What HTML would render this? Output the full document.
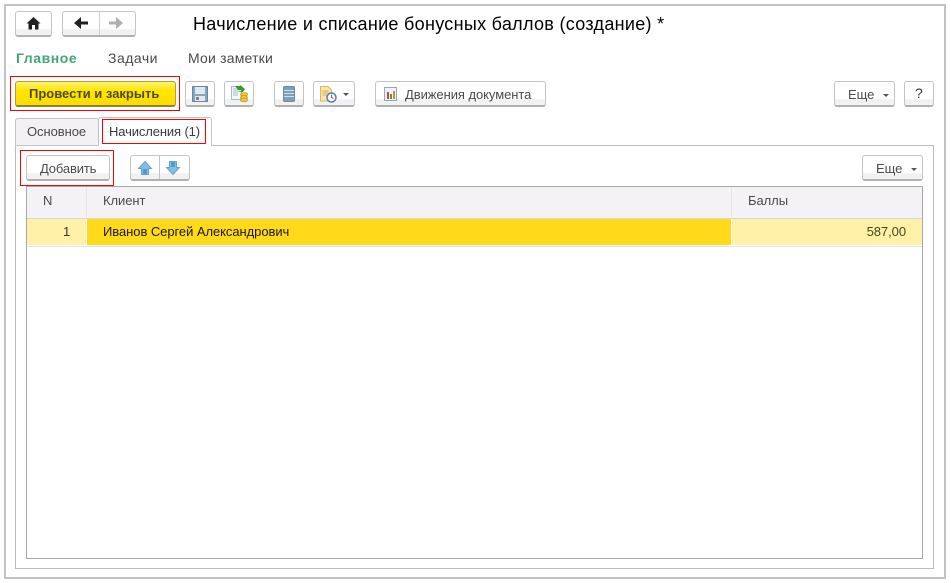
<!DOCTYPE html>
<html><head><meta charset="utf-8">
<style>
html,body{margin:0;padding:0;background:#fff}
body{width:951px;height:583px;position:relative;overflow:hidden;font-family:"Liberation Sans",sans-serif;font-size:13px;color:#4a4a4a}
.a{position:absolute;box-sizing:border-box}
.t{position:absolute;white-space:nowrap;line-height:16px;letter-spacing:-.06px}
.b{position:absolute;box-sizing:border-box;height:26px;background:linear-gradient(#fff 0,#fff 72%,#f1eff1 78%,#f4f3f4 100%);border:1px solid #c4c4c4;border-bottom:2px solid #b0b0b0;border-radius:3px}
svg{position:absolute;overflow:visible}
.r{position:absolute;box-sizing:border-box;border:1px solid #f00}
</style></head><body>
<div class="a" style="left:4px;top:4px;width:942px;height:575px;border:2px solid #c3c3c3"></div>

<div class="b" style="left:15px;top:11px;width:37px"></div>
<svg style="left:26px;top:16px" width="15" height="14"><path d="M7.5 1 L14.5 7.5 H12.5 V13.5 H9 V9 H6 V13.5 H2.5 V7.5 H.5 Z" fill="#222"/></svg>
<div class="b" style="left:62px;top:11px;width:74px"></div>
<div class="a" style="left:99px;top:12px;width:1px;height:23px;background:#d0d0d0"></div>
<svg style="left:74px;top:17px" width="15" height="12"><path d="M0 6 L7 0 V4.5 H14 V7.5 H7 V12 Z" fill="#222"/></svg>
<svg style="left:109px;top:17px" width="15" height="12"><path d="M14 6 L7 0 V4.5 H0 V7.5 H7 V12 Z" fill="#b0b0b0"/></svg>

<div class="t" style="left:193px;top:14px;font-size:18px;line-height:20px;color:#000;letter-spacing:.3px">Начисление и списание бонусных баллов (создание) *</div>

<div class="t" style="left:16px;top:50px;font-size:14px;font-weight:bold;color:#3fa873;letter-spacing:.55px">Главное</div>
<div class="t" style="left:108px;top:50px;font-size:14px;color:#4a4a4a;letter-spacing:.5px">Задачи</div>
<div class="t" style="left:188px;top:50px;font-size:14px;color:#4a4a4a;letter-spacing:.2px">Мои заметки</div>

<div class="r" style="left:10px;top:76px;width:170px;height:35px"></div>
<div class="a" style="left:15px;top:81px;width:161px;height:26px;border:1px solid #b3a032;border-bottom:2px solid #8f8230;border-radius:3px;background:linear-gradient(#fff27a 0,#ffe600 35%,#fedc00 100%)"></div>
<div class="t" style="left:29px;top:86px;font-size:13px;font-weight:bold;color:#4e4a24;letter-spacing:0">Провести и закрыть</div>

<div class="b" style="left:185px;top:81px;width:30px"></div>
<svg style="left:192px;top:86px" width="16" height="16"><rect x=".5" y=".5" width="15" height="15" fill="#8aa3bb" stroke="#6a87a3"/><rect x="3" y="1" width="10" height="7" fill="#dfe7ef"/><rect x="3" y="10" width="10" height="5" fill="#e8e8e8"/><rect x="4" y="11" width="3" height="3" fill="#6a87a3"/></svg>

<div class="b" style="left:224px;top:81px;width:30px"></div>
<svg style="left:231px;top:85px" width="18" height="18"><rect x=".5" y="1.5" width="10" height="13" fill="#f4f7f9" stroke="#a8bcc9"/><path d="M2 4h7M2 6h7M2 8h5M2 10h5" stroke="#a8bfce"/><path d="M4 1h5V0l5 4-2 3H8l3-2H7Z" fill="#3a9a2e"/><ellipse cx="13" cy="9.5" rx="3.5" ry="1.8" fill="#f5c93c" stroke="#b98a10" stroke-width=".7"/><ellipse cx="13" cy="12.5" rx="3.5" ry="1.8" fill="#f5c93c" stroke="#b98a10" stroke-width=".7"/><ellipse cx="13" cy="15" rx="3.5" ry="1.8" fill="#f5c93c" stroke="#b98a10" stroke-width=".7"/></svg>

<div class="b" style="left:274px;top:81px;width:30px"></div>
<svg style="left:283px;top:86px" width="12" height="16"><rect x=".5" y=".5" width="11" height="15" rx="1" fill="#7d9fb9" stroke="#6a8ca6"/><path d="M1 4.5h10M1 7.5h10M1 10.5h10" stroke="#d4e0e9"/></svg>

<div class="b" style="left:313px;top:81px;width:42px"></div>
<svg style="left:320px;top:86px" width="18" height="17"><path d="M.5.5H8L11.5 4V15H.5Z" fill="#f8e6a8" stroke="#d8b860"/><path d="M2.5 5h6M2.5 7h6M2.5 9h4" stroke="#d2ad58"/><circle cx="11.5" cy="11.5" r="4.5" fill="#fff" stroke="#4f7fb5" stroke-width="1.5"/><path d="M11.5 8.5v3l2 1" stroke="#c9483c" fill="none"/></svg>
<svg style="left:343px;top:93px" width="6" height="3"><path d="M0 0H6L3 3Z" fill="#555"/></svg>

<div class="b" style="left:375px;top:81px;width:171px"></div>
<svg style="left:384px;top:87px" width="13" height="14"><rect x=".5" y=".5" width="12" height="13" fill="#eef3f7" stroke="#8fa8ba"/><rect x="3" y="5" width="2" height="7" fill="#c9483c"/><rect x="6" y="7" width="2" height="5" fill="#4f9a3e"/><rect x="9" y="4" width="2" height="8" fill="#d08a3a"/></svg>
<div class="t" style="left:405px;top:87px">Движения документа</div>

<div class="b" style="left:834px;top:81px;width:61px"></div>
<div class="t" style="left:848px;top:87px">Еще</div>
<svg style="left:883px;top:94px" width="6" height="3"><path d="M0 0H6L3 3Z" fill="#555"/></svg>
<div class="b" style="left:904px;top:81px;width:30px"></div>
<div class="t" style="left:915px;top:85px;font-size:14px;color:#333">?</div>

<!-- panel -->
<div class="a" style="left:15px;top:145px;width:919px;height:424px;border:1px solid #bcbcbc"></div>
<div class="a" style="left:15px;top:118px;width:84px;height:28px;background:#f3f1f3;border:1px solid #c4c4c4;border-radius:3px 3px 0 0"></div>
<div class="t" style="left:27px;top:124px">Основное</div>
<div class="a" style="left:98px;top:117px;width:114px;height:29px;background:#fff;border:1px solid #c4c4c4;border-bottom:0;border-radius:3px 3px 0 0"></div>
<div class="r" style="left:102px;top:119px;width:104px;height:25px"></div>
<div class="t" style="left:109px;top:124px;color:#3a3a3a;letter-spacing:-.12px">Начисления (1)</div>

<div class="r" style="left:20px;top:150px;width:94px;height:36px"></div>
<div class="b" style="left:26px;top:155px;width:84px"></div>
<div class="t" style="left:40px;top:161px;letter-spacing:-.15px">Добавить</div>

<div class="b" style="left:130px;top:155px;width:60px"></div>
<div class="a" style="left:159px;top:156px;width:1px;height:23px;background:#c4c4c4"></div>
<svg style="left:138px;top:161px" width="14" height="15"><path d="M7 .5 L13.5 7.5 H10.5 V13.5 H3.5 V7.5 H.5 Z" fill="#7fc0e8" stroke="#6aa6c8"/><rect x="5" y="8" width="4" height="5" fill="#4f9bcf"/></svg>
<svg style="left:166px;top:161px" width="14" height="15"><path d="M7 13.5 L13.5 6.5 H10.5 V.5 H3.5 V6.5 H.5 Z" fill="#7fc0e8" stroke="#6aa6c8"/><rect x="5" y="1" width="4" height="5" fill="#4f9bcf"/></svg>

<div class="b" style="left:862px;top:155px;width:61px"></div>
<div class="t" style="left:876px;top:161px">Еще</div>
<svg style="left:911px;top:168px" width="6" height="3"><path d="M0 0H6L3 3Z" fill="#555"/></svg>

<!-- table -->
<div class="a" style="left:26px;top:186px;width:897px;height:373px;border:1px solid #a8a8a8;background:#fff"></div>
<div class="a" style="left:27px;top:187px;width:895px;height:31px;background:#f5f2f6"></div>
<div class="a" style="left:86px;top:187px;width:1px;height:31px;background:#e6e6e6"></div>
<div class="a" style="left:731px;top:187px;width:1px;height:31px;background:#e6e6e6"></div>
<div class="t" style="left:43px;top:193px">N</div>
<div class="t" style="left:103px;top:193px">Клиент</div>
<div class="t" style="left:748px;top:193px">Баллы</div>
<div class="a" style="left:27px;top:218px;width:895px;height:1px;background:#d8d8d8"></div>
<div class="a" style="left:27px;top:219px;width:59px;height:26px;background:#fff2a8"></div>
<div class="a" style="left:87px;top:219px;width:644px;height:26px;background:#ffd91a"></div>
<div class="a" style="left:732px;top:219px;width:190px;height:26px;background:#fff2a8"></div>
<div class="a" style="left:27px;top:246px;width:895px;height:1px;background:#e2e2e2"></div>
<div class="t" style="left:63px;top:224px;color:#333">1</div>
<div class="t" style="left:103px;top:224px;color:#1d1a00">Иванов Сергей Александрович</div>
<div class="t" style="right:45px;top:224px;color:#4a4520">587,00</div>
</body></html>
